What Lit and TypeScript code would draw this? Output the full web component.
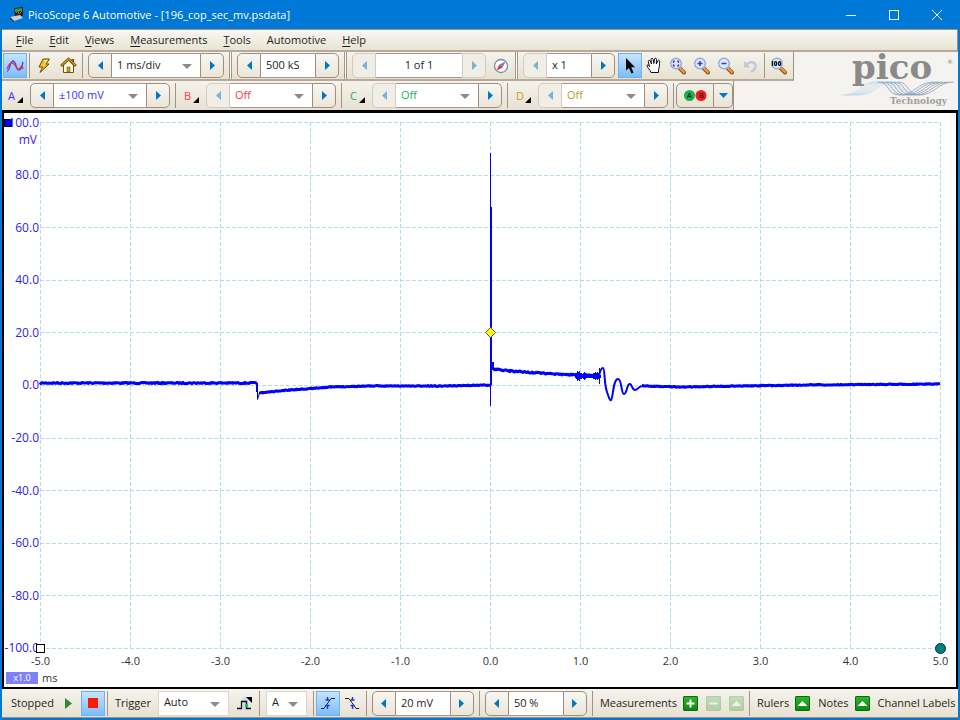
import { LitElement, html, css, svg } from "lit";
import { customElement, property } from "lit/decorators.js";

const controls = css`
  * {
    box-sizing: border-box;
  }
  button {
    font: inherit;
    color: inherit;
    margin: 0;
    padding: 0;
    border: 0;
    background: none;
    flex: none;
    display: flex;
    align-items: center;
    justify-content: center;
  }
  button svg {
    display: block;
  }
  select,
  input {
    font: inherit;
    color: inherit;
    margin: 0;
    border: 0;
    border-radius: 0;
    background: #fff;
    appearance: none;
    outline: none;
    min-width: 0;
    opacity: 1;
  }
`;

/** A drop-down with the flat grey arrow used in every toolbar. */
@customElement("scope-select")
class ScopeSelect extends LitElement {
  @property() value = "";
  @property() label = "";
  static styles = [
    controls,
    css`
      :host {
        display: block;
        position: relative;
        height: 100%;
      }
      select {
        display: block;
        width: 100%;
        height: 100%;
        padding: 0 16px 2px 5px;
      }
      .arrow {
        position: absolute;
        right: 8px;
        top: 10px;
        width: 10px;
        height: 5px;
        pointer-events: none;
      }
    `,
  ];
  render() {
    return html`<select aria-label=${this.label}><option>${this.value}</option></select>
      <svg class="arrow" viewBox="0 0 10 5"><path d="M0 0H10L5 5Z" fill="#8c8c8c" /></svg>`;
  }
}

/** Previous / value / next control. */
@customElement("scope-stepper")
class ScopeStepper extends LitElement {
  @property() value = "";
  @property() label = "";
  @property({ type: Boolean }) drop = false;
  @property({ type: Boolean }) center = false;
  @property({ type: Boolean }) noprev = false;
  @property({ type: Boolean }) nonext = false;
  static styles = [
    controls,
    css`
      :host {
        display: flex;
        height: 25px;
        flex: none;
      }
      button {
        width: 24px;
        border: 1px solid #a08d7f;
        background: linear-gradient(#f7f6f2, #ebe6d8);
      }
      button.prev {
        border-radius: 5px 0 0 5px;
      }
      button.next {
        border-radius: 0 5px 5px 0;
      }
      button[disabled] {
        border-color: #d3cbc2;
        background: #f1eee7;
      }
      button[disabled] svg {
        opacity: 0.5;
      }
      .field {
        flex: 1;
        min-width: 0;
        border-top: 1px solid #a89688;
        border-bottom: 1px solid #a89688;
      }
      input {
        width: 100%;
        height: 100%;
        display: block;
        padding: 0 5px 2px;
      }
      .mid {
        text-align: center;
      }
    `,
  ];
  render() {
    return html`<button class="prev" aria-label="Previous ${this.label}" ?disabled=${this.noprev}>
        <svg width="5" height="9"><path d="M5 0V9L0 4.5Z" fill="#0078c8" /></svg>
      </button>
      <div class="field">
        ${this.drop
          ? html`<scope-select label=${this.label} value=${this.value}></scope-select>`
          : html`<input class=${this.center ? "mid" : ""} aria-label=${this.label} .value=${this.value} />`}
      </div>
      <button class="next" aria-label="Next ${this.label}" ?disabled=${this.nonext}>
        <svg width="5" height="9"><path d="M0 0V9L5 4.5Z" fill="#0078c8" /></svg>
      </button>`;
  }
}

const lens = (mark: unknown) => html`<svg width="18" height="18" viewBox="0 0 18 18">
  <path d="M10.500 11L15 15.500" stroke="#8f5a28" stroke-width="4" stroke-linecap="round" />
  <path d="M10.500 10.500L15 15" stroke="#f0963c" stroke-width="2.400" stroke-linecap="round" />
  <circle cx="7" cy="6.500" r="5.300" fill="#d7ebfc" stroke="#8fb0dc" stroke-width="1.400" />
  ${mark}
</svg>`;

const icons = {
  wave: html`<svg width="18" height="14" viewBox="0 0 18 14" fill="none" stroke-width="1.300">
    <path d="M1 12C4 12 4 2 7 2S10 11 13 11S16 7 17 3" stroke="#4848d8" />
    <path d="M1 10C3 5 5 2 8 5S11 12 13 10S16 5 17 10" stroke="#e0304c" />
  </svg>`,
  bolt: html`<svg width="14" height="16" viewBox="0 0 14 16">
    <path d="M6 1H12.500L9 6H12L3 14.500L5.500 9H2Z" fill="#f5b81c" stroke="#6b4a06" />
    <path d="M7 2.500H10L6 7.500" fill="none" stroke="#fff2a0" />
  </svg>`,
  home: html`<svg width="17" height="17" viewBox="0 0 17 17">
    <path d="M11.500 2.500H13.500V6" fill="#b86020" stroke="#7a4a10" />
    <path d="M3.500 8V15.500H13.500V8L8.500 3Z" fill="#fffbe8" stroke="#6b5010" />
    <path d="M1 9L8.500 2L16 9" fill="none" stroke="#7a5608" stroke-width="2.600" />
    <path d="M1.500 8.500L8.500 2L15.500 8.500" fill="none" stroke="#f0b824" stroke-width="1" />
    <path d="M7 15V10H10V15Z" fill="#d89820" stroke="#7a5608" stroke-width=".6" />
  </svg>`,
  compass: html`<svg width="16" height="16" viewBox="0 0 16 16">
    <circle cx="8" cy="8" r="6.500" fill="#fff" stroke="#8088a0" stroke-width="1.300" />
    <path d="M12.500 3.500L9.500 9.500L6.500 6.500Z" fill="#6880d8" />
    <path d="M3.500 12.500L9.500 9.500L6.500 6.500Z" fill="#f02828" />
  </svg>`,
  pointer: html`<svg width="12" height="18" viewBox="0 0 12 18">
    <path d="M2 1V13.500L5 11L7.500 16.500L9.500 15.500L7.200 10.300H11Z" fill="#000" />
  </svg>`,
  hand: html`<svg width="16" height="17" viewBox="0 0 16 17">
    <path
      d="M5 15.500C4.500 13 1 10.500 1 8.500C1 7.500 2.500 7.500 3.500 9.500L2.300 4.500C2.300 3 4 3 4.400 4.300L5.500 7L5 2.500C5 1 7 1 7.200 2.500L7.800 6.500L8.500 2C8.800 .8 10.500 1 10.500 2.500L10.300 7L11.800 3.800C12.500 2.600 14 3.200 13.700 4.800C13.300 7 13.800 10 12.500 12.500V15.500Z"
      fill="#fff"
      stroke="#111"
    />
  </svg>`,
  zoomBox: lens(
    svg`<path d="M4.500 6V4.200H6M8 4.200H9.500V6M9.500 7.200V8.800H8M6 8.800H4.500V7.200" fill="none" stroke="#6a3cb8" stroke-width="1.300" />`,
  ),
  zoomIn: lens(svg`<path d="M4.500 6.500H9.500M7 4V9" stroke="#5a2cb0" stroke-width="1.500" />`),
  zoomOut: lens(svg`<path d="M4.500 6.500H9.500" stroke="#5a2cb0" stroke-width="1.500" />`),
  zoomFull: lens(
    svg`<g fill="none" stroke="#111" stroke-width="1.300"><path d="M2.500 4V9" /><rect x="4.600" y="4.600" width="2" height="3.800" rx="1" /><rect x="8.600" y="4.600" width="2" height="3.800" rx="1" /></g>`,
  ),
  undo: html`<svg width="15" height="14" viewBox="0 0 15 14">
    <path d="M1 2V8.500H7.500Z" fill="#c2cad8" />
    <path d="M4 5.500C6 2.500 12.500 2 12.500 7C12.500 10 10.500 11.500 8 13" fill="none" stroke="#c2cad8" stroke-width="2.600" />
  </svg>`,
  play: html`<svg width="7" height="11"><path d="M0 0L7 5.500L0 11Z" fill="#2c8a34" /></svg>`,
  stop: html`<svg width="10" height="10"><rect width="10" height="10" fill="#ff1800" /></svg>`,
  trig: html`<svg width="16" height="15" viewBox="0 0 16 15">
    <rect x="6" y="1" width="5" height="13" fill="#c8dcf4" />
    <path d="M0 12.500H4.500V5.500H9.500V12.500H14" fill="none" stroke="#111" stroke-width="1.300" />
    <path d="M9 1H15V7Z" fill="#000" />
    <rect x="8" y="8" width="3" height="3" fill="#18c848" />
  </svg>`,
  rise: html`<svg width="14" height="14" viewBox="0 0 14 14">
    <path d="M0 12.500H3L10 2.500H14" fill="none" stroke="#222" />
    <path d="M6.500 1V4M6.500 10V13M4.500 4H8.500M4.500 9.500H8.500" stroke="#2a2ae8" stroke-width="1.400" />
  </svg>`,
  fall: html`<svg width="14" height="14" viewBox="0 0 14 14">
    <path d="M0 2.500H4L11 12.500H14" fill="none" stroke="#222" />
    <path d="M7.500 1V4M7.500 10V13M5.500 4H9.500M5.500 9.500H9.500" stroke="#2a2ae8" stroke-width="1.400" />
  </svg>`,
  plus: html`<svg width="13" height="13"><path d="M6.500 2.500V10.500M2.500 6.500H10.500" stroke="#fff" stroke-width="2" /></svg>`,
  minus: html`<svg width="13" height="13"><path d="M2.500 6.500H10.500" stroke="#fff" stroke-width="2" /></svg>`,
  up: html`<svg width="13" height="13"><path d="M1.500 9L6.500 4L11.500 9Z" fill="#fff" /></svg>`,
};

/** Pseudo-random noise with a fixed seed so the trace is stable between renders. */
function noise(seed: number) {
  let s = seed;
  return () => {
    s = (s * 16807) % 2147483647;
    return s / 2147483647 - 0.5;
  };
}

/** Joins key points (plot pixels) with one sample per pixel plus noise. */
function trace(points: number[][], amp: number, seed: number) {
  const rnd = noise(seed);
  const out: string[] = [];
  for (let i = 0; i < points.length - 1; i++) {
    const [x0, y0] = points[i];
    const [x1, y1] = points[i + 1];
    for (let x = x0; x <= x1; x++) {
      const y = y0 + ((y1 - y0) * (x - x0)) / (x1 - x0);
      out.push(x + " " + (y + rnd() * amp).toFixed(1));
    }
  }
  return "M" + out.join("L");
}

/** Dense vertical bars around a centre line, for the noisy end of the burn. */
function bars(from: number, heights: number[], mid: number) {
  return heights.map((h, i) => `M${from + i + 0.5} ${mid - h}V${mid + h}`).join("");
}

const lead = trace([[0, 261], [217, 261]], 1.2, 7);
const charge = trace([[219, 271], [250, 268], [290, 265], [330, 264], [400, 264], [451, 263]], 0.8, 11);
const burn = trace([[453, 247], [470, 249], [500, 251], [536, 253], [561, 254]], 1.6, 5);
const burst = bars(535, [2, 3, 5, 4, 5, 3, 3, 2, 3, 4, 3, 2, 2, 2, 2, 2, 2, 2, 3, 3, 4, 3, 4, 3, 8], 254);
const tail = trace([[602, 264], [640, 265], [760, 263], [900, 262]], 0.8, 23);

@customElement("scope-chart")
class ScopeChart extends LitElement {
  static styles = css`
    :host {
      display: flex;
      flex-direction: column;
      background: #fff;
      border: 2px solid #000;
      border-top-width: 3px;
      padding: 9px 15px 1px 0;
      color: #333;
      min-height: 0;
    }
    .main {
      flex: 1;
      min-height: 0;
      display: flex;
    }
    .yaxis {
      width: 36px;
      padding-right: 1px;
      box-sizing: border-box;
      flex: none;
      display: flex;
      flex-direction: column;
      justify-content: space-between;
      position: relative;
      color: #3320f0;
      font-size: 12px;
      text-align: right;
    }
    .yaxis span {
      display: flex;
      align-items: center;
      justify-content: flex-end;
      height: 1px;
      white-space: nowrap;
      z-index: 1;
    }
    .unit {
      position: absolute;
      right: 3px;
      top: 10px;
    }
    .handle {
      position: absolute;
      left: 0;
      top: -3px;
      width: 8px;
      height: 8px;
      box-sizing: border-box;
      background: #0000ff;
      border: 1px solid #000;
    }
    .plot {
      flex: 1;
      min-width: 0;
      position: relative;
    }
    .plot svg {
      display: block;
      width: 100%;
      height: 100%;
      position: absolute;
      z-index: 2;
      overflow: visible;
    }
    .grid {
      stroke: #b4dcea;
      stroke-dasharray: 4 2;
      fill: none;
    }
    .signal {
      stroke: #0000ff;
      fill: none;
      stroke-linejoin: round;
    }
    .w1 {
      stroke-width: 1px;
    }
    .w2 {
      stroke-width: 2px;
    }
    .w3 {
      stroke-width: 3px;
    }
    .origin,
    .knob {
      position: absolute;
      z-index: 3;
      box-sizing: border-box;
    }
    .origin {
      left: -4px;
      bottom: -4px;
      width: 9px;
      height: 9px;
      background: #fff;
      border: 1px solid #000;
    }
    .knob {
      right: -5px;
      bottom: -5px;
      width: 11px;
      height: 11px;
      border-radius: 50%;
      background: #008080;
      border: 1px solid #033;
    }
    .xaxis {
      display: flex;
      justify-content: space-between;
      margin: 4px 0 0 36px;
      height: 16px;
      line-height: 16px;
    }
    .xaxis span {
      width: 1px;
      display: flex;
      justify-content: center;
      white-space: nowrap;
    }
    .foot {
      display: flex;
      align-items: center;
      gap: 4px;
      margin-left: 2px;
      height: 17px;
    }
    .scale {
      width: 32px;
      height: 12px;
      line-height: 12px;
      font-size: 9px;
      text-align: center;
      background: #8080ff;
      color: #fff;
    }
  `;
  render() {
    const ys = [100, 80, 60, 40, 20, 0, -20, -40, -60, -80, -100];
    const xs = [-5, -4, -3, -2, -1, 0, 1, 2, 3, 4, 5];
    return html`<div class="main">
        <div class="yaxis">
          ${ys.map((v) => html`<span>${v.toFixed(1)}</span>`)}
          <div class="unit">mV</div>
          <div class="handle"></div>
        </div>
        <div class="plot">
          <svg viewBox="0 0 901 527" preserveAspectRatio="none" role="img" aria-label="Channel A">
            <g class="grid" shape-rendering="crispEdges">
              ${xs.map((_, i) => svg`<path d="M${i * 90 + 0.5} 0V527" />`)}
              ${ys.map((_, i) => svg`<path d="M0 ${Math.round(i * 52.6) + 0.5}H901" />`)}
            </g>
            <g class="signal">
              <path class="w3" d=${lead} />
              <path class="w2" d="M217 261V270" />
              <path class="w1" d="M217.500 270V277.500L219.500 271" />
              <path class="w3" d=${charge} />
              <path class="w1" d="M450.500 31V284" />
              <path class="w2" d="M451 85V263" />
              <path class="w2" d="M453 240V248" />
              <path class="w3" d=${burn} />
              <path class="w1" d=${burst} />
              <path
                class="w2"
                d="M559 254C560 249 561 246 563 246C565 246 564 262 567 270C569 276 570 279 571 278C573 277 573 257 578 257C582 257 581 272 584 272C587 272 587 261 590 262C592 262 592 268 595 268C598 268 598 264 603 264"
              />
              <path class="w3" d=${tail} />
            </g>
            <path d="M450.500 205.500L455.500 210.500L450.500 215.500L445.500 210.500Z" fill="#ffff00" stroke="#555" />
          </svg>
          <div class="origin"></div>
          <div class="knob"></div>
        </div>
      </div>
      <div class="xaxis">${xs.map((v) => html`<span>${v.toFixed(1)}</span>`)}</div>
      <div class="foot"><span class="scale">x1.0</span><span>ms</span></div>`;
  }
}

@customElement("app-root")
class AppRoot extends LitElement {
  static styles = [
    controls,
    css`
      :host {
        display: flex;
        flex-direction: column;
        box-sizing: border-box;
        height: 100vh;
        border: solid #0078d7;
        border-width: 0 2px 2px;
        background: #f5f3ef;
        font: 11px/16px "Open Sans", sans-serif;
        color: #1e1e1e;
        overflow: hidden;
      }
      .title {
        flex: none;
        height: 29px;
        display: flex;
        align-items: center;
        background: #0078d7;
        color: #fff;
        padding-left: 8px;
      }
      .title h1 {
        font: inherit;
        margin: 0 auto 0 4px;
      }
      .title button {
        width: 43px;
        height: 29px;
      }
      nav {
        flex: none;
        height: 23px;
        display: flex;
        align-items: center;
        gap: 16px;
        padding-left: 14px;
        background: linear-gradient(#f8f7f3, #e8e3d3);
        border-top: 1px solid #a09080;
        border-bottom: 2px solid #b9a99d;
        border-right: 1px solid #a09080;
      }
      nav a {
        color: inherit;
        text-decoration: none;
      }
      nav u {
        text-underline-offset: 2px;
      }
      .bars {
        flex: none;
        display: flex;
        justify-content: space-between;
        align-items: flex-start;
        height: 58px;
      }
      .row {
        display: flex;
        align-items: center;
        width: max-content;
        background: linear-gradient(#f5f3ed, #e7e1d1);
        border-right: 1px solid #a09080;
        height: 29px;
      }
      .row.first {
        border-bottom: 2px solid #b9a99d;
        padding: 0 2px 0 1px;
      }
      .tool {
        width: 24px;
        height: 25px;
      }
      .on {
        background: linear-gradient(#c6e4ff, #7dbcf8);
        border: 1px solid #6cb2f0;
      }
      .sep {
        flex: none;
        width: 1px;
        height: 25px;
        margin: 0 2px;
        background: #a39386;
      }
      .rail {
        flex: none;
        width: 3px;
        height: 27px;
        margin: 0 2px;
        border: solid #a39386;
        border-width: 0 1px;
        background: #fff;
      }
      scope-stepper {
        margin: 0 3px;
      }
      .chan {
        width: 25px;
        height: 25px;
        justify-content: space-between;
        padding: 0 4px 0 6px;
      }
      .chan svg {
        align-self: flex-end;
        margin-bottom: 5px;
      }
      .a {
        color: #3a30ff;
      }
      .b {
        color: #ff3b4b;
      }
      .c {
        color: #20b060;
      }
      .d {
        color: #c8992c;
      }
      .count {
        width: 102px;
      }
      .time {
        width: 136px;
      }
      .page {
        width: 134px;
      }
      .zoom {
        width: 92px;
      }
      .range {
        width: 140px;
      }
      .off {
        width: 130px;
      }
      .ab,
      .abmore {
        height: 25px;
        border: 1px solid #a08d7f;
      }
      .ab {
        width: 38px;
        border-radius: 5px 0 0 5px;
      }
      .abmore {
        width: 19px;
        border-left: 0;
        border-radius: 0 5px 5px 0;
      }
      .logo {
        flex: none;
        width: 118px;
        height: 56px;
        overflow: visible;
      }
      scope-chart {
        flex: 1;
      }
      footer {
        flex: none;
        height: 29px;
        display: flex;
        align-items: center;
        padding-left: 4px;
        background: linear-gradient(#f5f3ed, #e7e1d1);
        border-bottom: 1px solid #a09080;
        white-space: nowrap;
      }
      .text {
        margin: 0 3px 0 5px;
      }
      .box {
        border: 1px solid #ddd5c9;
        height: 25px;
        margin: 0 4px;
        flex: none;
      }
      .mode {
        width: 71px;
      }
      .source {
        width: 41px;
      }
      .greens {
        display: flex;
        gap: 8px;
        margin: 0 3px;
      }
      .green {
        width: 15px;
        height: 15px;
        background: linear-gradient(#2eb42c, #0c8a14);
        border: 1px solid #0b6a10;
        border-radius: 1px;
      }
      .green[disabled] {
        opacity: 0.25;
      }
    `,
  ];

  channel(name: string, cls: string, value: string, first = false) {
    return html`<button class="chan ${cls}" aria-label="Channel ${name} options">
        ${name}<svg width="6" height="6"><path d="M6 0V6H0Z" fill="#000" /></svg>
      </button>
      <scope-stepper
        class="${cls} ${first ? "range" : "off"}"
        drop
        ?noprev=${!first}
        label="Channel ${name} range"
        value=${value}
      ></scope-stepper>`;
  }

  tool(name: keyof typeof icons, label: string, on = false) {
    return html`<button class="tool ${on ? "on" : ""}" aria-label=${label}>${icons[name]}</button>`;
  }

  green(name: keyof typeof icons, label: string, off = false) {
    return html`<button class="green" aria-label=${label} ?disabled=${off}>${icons[name]}</button>`;
  }

  logo() {
    const waves = [0, 1, 2, 3, 4, 5];
    return html`<svg class="logo" viewBox="0 0 118 56" role="img" aria-label="pico Technology">
      <g fill="none" stroke-width=".8">
        ${waves.map(
          (i) => svg`<path stroke="#c0d8ec" d="M${1 + i * 3} 43C${22 + i * 3} 43 ${18 + i * 4} 30 ${36 + i * 3} 30S${46 + i * 4} 43 ${60 + i * 4} 43" />`,
        )}
        ${waves.map(
          (i) => svg`<path stroke="#8c9fb8" d="M${38 + i * 4} 30C${50 + i * 4} 30 ${46 + i * 4} 43 ${60 + i * 4} 43S${78 + i * 4} 30 ${94 + i * 4} 30" />`,
        )}
      </g>
      <text x="12" y="27" font-family="DejaVu Serif" font-weight="bold" font-size="34" fill="#8a8a8a">pico</text>
      <text x="107" y="12" font-family="DejaVu Serif" font-size="6" fill="#858585">®</text>
      <text x="50" y="52" font-family="DejaVu Serif" font-size="9" font-weight="bold" fill="#a0a0a0">Technology</text>
    </svg>`;
  }

  render() {
    const sep = html`<span class="sep"></span>`;
    const rail = html`<span class="rail"></span>`;
    return html`
      <header class="title">
        <svg width="14" height="15" viewBox="0 0 14 15">
          <path d="M4 1L13 0V9L5 10Z" fill="#222" />
          <path d="M5 2L12 1V4L5 5Z" fill="#1da838" />
          <path d="M6 6L8 4L9 7L12 4" stroke="#f04040" fill="none" />
          <path d="M0 10L10 8L13 11L4 14Z" fill="#c8d0d8" />
          <path d="M0 10L4 14V15L0 12Z" fill="#333" />
        </svg>
        <h1>PicoScope 6 Automotive - [196_cop_sec_mv.psdata]</h1>
        <button aria-label="Minimize"><svg width="10" height="10"><path d="M0 5.500H10" stroke="#fff" /></svg></button>
        <button aria-label="Maximize">
          <svg width="10" height="10"><rect x=".5" y=".5" width="9" height="9" fill="none" stroke="#fff" /></svg>
        </button>
        <button aria-label="Close"><svg width="10" height="10"><path d="M0 0L10 10M10 0L0 10" stroke="#fff" /></svg></button>
      </header>
      <nav>
        <a href="#"><u>F</u>ile</a><a href="#"><u>E</u>dit</a><a href="#"><u>V</u>iews</a><a href="#"><u>M</u>easurements</a>
        <a href="#"><u>T</u>ools</a><a href="#">Automotive</a><a href="#"><u>H</u>elp</a>
      </nav>
      <div class="bars">
        <div>
          <div class="row first">
            ${this.tool("wave", "Scope mode", true)} ${sep} ${this.tool("bolt", "Quick setup")} ${this.tool("home", "Home")} ${sep}
            <scope-stepper class="time" drop label="Timebase" value="1 ms/div"></scope-stepper>
            ${rail}
            <scope-stepper class="count" label="Samples" value="500 kS"></scope-stepper>
            ${rail}
            <scope-stepper class="page" center noprev nonext label="Waveform" value="1 of 1"></scope-stepper>
            ${this.tool("compass", "Buffer overview")} ${rail}
            <scope-stepper class="zoom" noprev label="Zoom" value="x 1"></scope-stepper>
            ${this.tool("pointer", "Select", true)} ${this.tool("hand", "Hand")} ${this.tool("zoomBox", "Window zoom")}
            ${this.tool("zoomIn", "Zoom in")} ${this.tool("zoomOut", "Zoom out")} ${this.tool("undo", "Undo zoom")} ${sep}
            ${this.tool("zoomFull", "Zoom to full view")}
          </div>
          <div class="row">
            ${this.channel("A", "a", "±100 mV", true)} ${sep} ${this.channel("B", "b", "Off")} ${sep}
            ${this.channel("C", "c", "Off")} ${sep} ${this.channel("D", "d", "Off")} ${sep}
            <button class="ab" aria-label="Probes">
              <svg width="23" height="11">
                <circle cx="5.500" cy="5.500" r="5.500" fill="#1cae50" />
                <circle cx="17" cy="5.500" r="5.500" fill="#ee1c24" />
                <text x="3" y="8" font-size="7" font-family="Liberation Sans">A</text>
                <text x="15" y="8" font-size="7" font-family="Liberation Sans">B</text>
              </svg>
            </button>
            <button class="abmore" aria-label="More probes"><svg width="9" height="5"><path d="M0 0H9L4.500 5Z" fill="#0078c8" /></svg></button>
          </div>
        </div>
        ${this.logo()}
      </div>
      <scope-chart></scope-chart>
      <footer>
        <span class="text">Stopped</span>${this.tool("play", "Start")}${this.tool("stop", "Stop", true)}${sep}
        <span class="text">Trigger</span><scope-select class="box mode" label="Trigger mode" value="Auto"></scope-select>
        ${this.tool("trig", "Advanced triggers")}${sep}
        <scope-select class="box source" label="Trigger channel" value="A"></scope-select>${sep}
        ${this.tool("rise", "Rising edge", true)}${this.tool("fall", "Falling edge")}${sep}
        <scope-stepper class="count" label="Threshold" value="20 mV"></scope-stepper>${sep}
        <scope-stepper class="count" label="Pre-trigger" value="50 %"></scope-stepper>${sep}
        <span class="text">Measurements</span>
        <div class="greens">
          ${this.green("plus", "Add measurement")}${this.green("minus", "Delete measurement", true)}
          ${this.green("up", "Edit measurement", true)}
        </div>
        ${sep}
        <span class="text">Rulers</span>
        <div class="greens">${this.green("up", "Rulers")}</div>
        <span class="text">Notes</span>
        <div class="greens">${this.green("up", "Notes")}</div>
        <span class="text">Channel Labels</span>
      </footer>
    `;
  }
}
